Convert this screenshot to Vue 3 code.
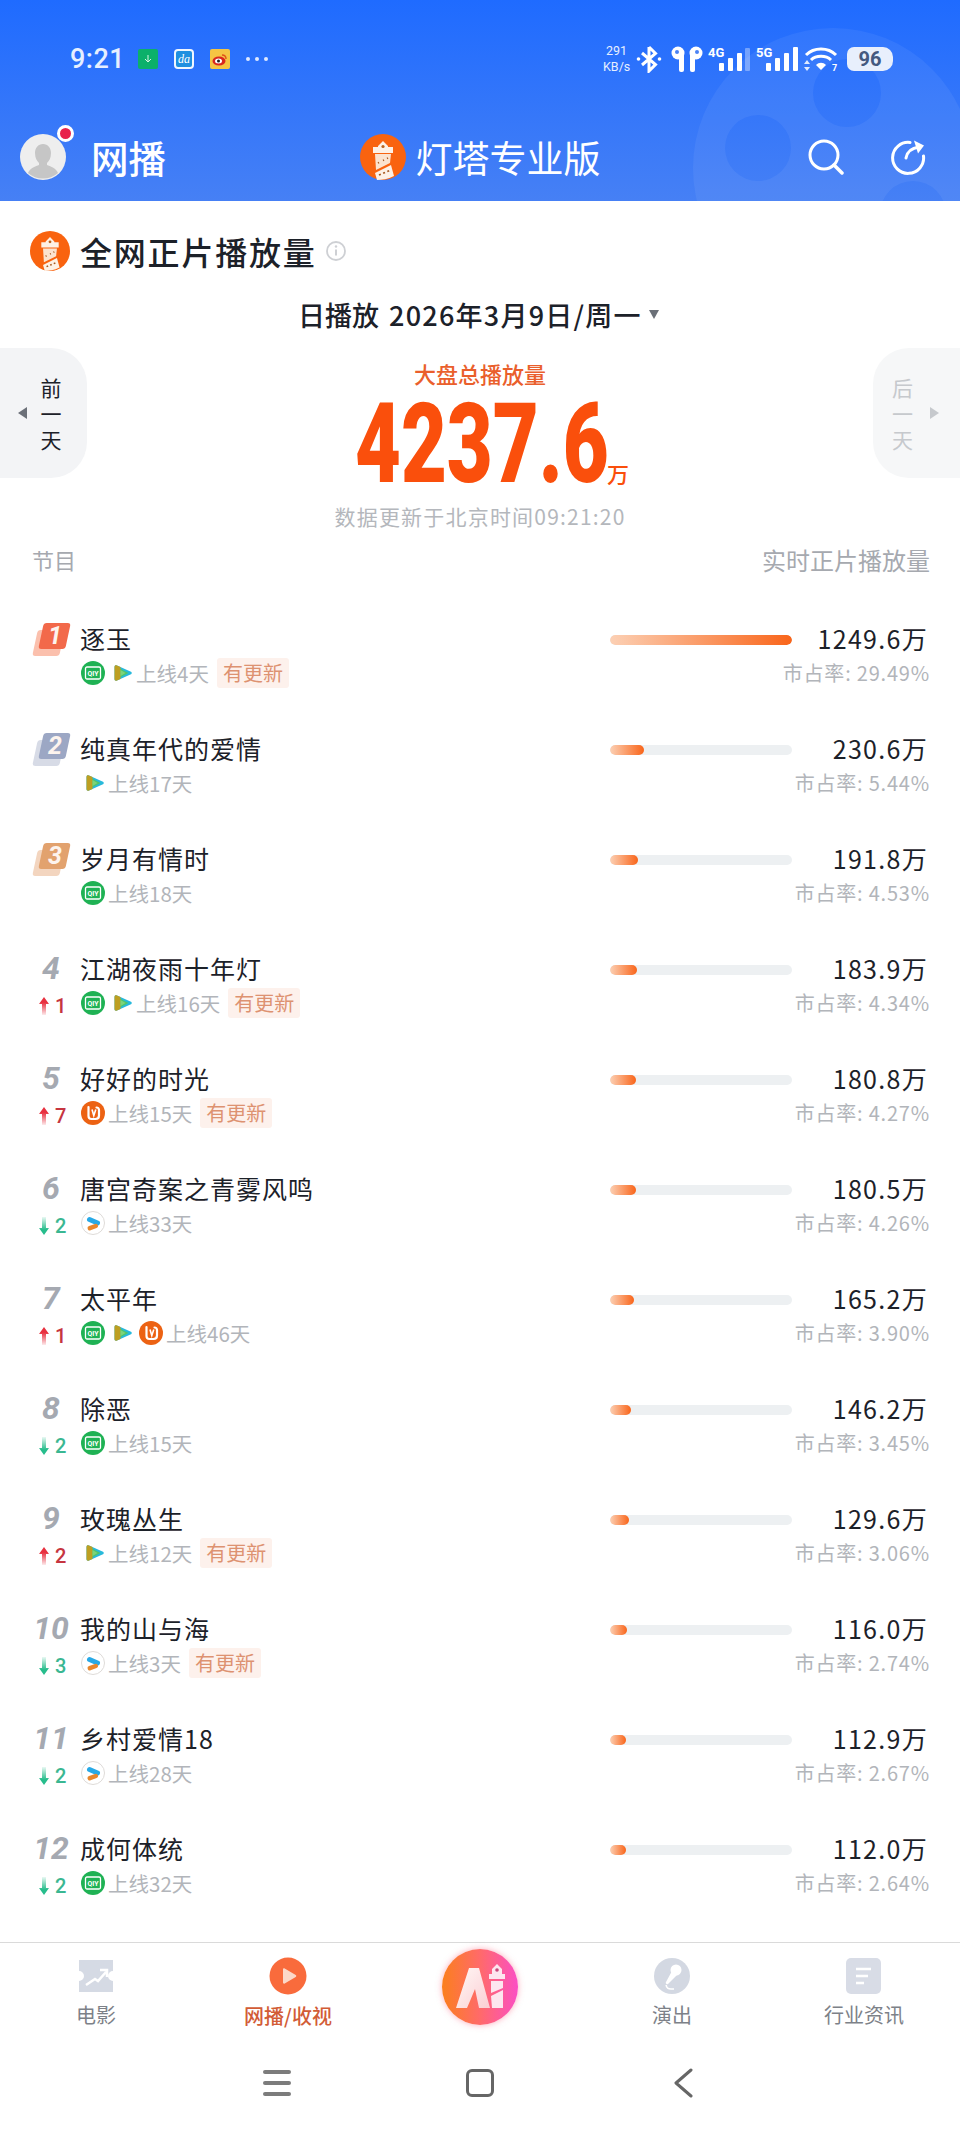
<template>
  <div class="page">
    <svg class="defs" aria-hidden="true">
      <defs>
        <symbol id="tower" viewBox="0 0 46 46">
          <circle cx="23" cy="23" r="23" fill="#f9630f" />
          <path d="M23 7l5 5v1h5v6H13v-6h5v-1z" fill="#fdf1e6" />
          <path d="M15 20h16l-1 9-14 7z" fill="#fbe3cf" />
          <path d="M15 39l16-8 3 11c-6 3-12 4-17 4z" fill="#fdf1e6" />
          <circle cx="23" cy="12.500" r="1.600" fill="#b9631f" />
          <path d="M18 29l1-.5M23 26.500l1-.5M27 24.500l1-.5M19 41l12-5" stroke="#a8591f" stroke-width="1.800" stroke-dasharray="2 2.500" />
        </symbol>
        <symbol id="iqiyi" viewBox="0 0 24 24">
          <circle cx="12" cy="12" r="12" fill="#1fb254" />
          <rect x="4.500" y="6" width="15" height="12" rx="1.500" fill="none" stroke="#fff" stroke-width="1.300" />
          <text x="12" y="15.200" text-anchor="middle" font-size="8" font-weight="700" fill="#fff" font-family="Roboto, sans-serif" textLength="11" lengthAdjust="spacingAndGlyphs">QIY</text>
        </symbol>
        <symbol id="tencent" viewBox="0 0 20 20">
          <path d="M4 2.500l14 6.300c1 .5 1 1.900 0 2.400L4 17.500c-1.500.6-2.500 0-2.500-1.500V4c0-1.500 1-2.100 2.500-1.500z" fill="#27b9dc" />
          <path d="M5 4.500L15.500 10 5 15.500z" fill="#4fc46c" />
          <path d="M1.500 4c0-1.500 1-2.100 2.500-1.500l3.500 1.600v11.800L4 17.500c-1.500.6-2.500 0-2.500-1.500z" fill="#bd9f22" />
          <path d="M7.500 7l5 3-5 3z" fill="#7cd37a" />
        </symbol>
        <symbol id="mango" viewBox="0 0 24 24">
          <circle cx="12" cy="12" r="12" fill="#ec6213" />
          <path d="M7.500 6v9c0 2 1 3 3 3h4c2.200 0 3.500-1.300 3.500-3.500V9c0-1.500-1-2.500-2.500-2.500" fill="none" stroke="#fff" stroke-width="2.200" stroke-linecap="round" />
          <path d="M11 8.500l1.800 6 2-6" fill="none" stroke="#fff" stroke-width="1.600" />
        </symbol>
        <symbol id="youku" viewBox="0 0 24 24">
          <circle cx="12" cy="12" r="11.500" fill="#fff" stroke="#dedbd8" />
          <path d="M8.500 8.500L16.500 12" fill="none" stroke="#27a9e6" stroke-width="5" stroke-linecap="round" />
          <path d="M8.800 17.200l6-2.200" fill="none" stroke="#e8872c" stroke-width="4.500" stroke-linecap="round" />
        </symbol>
        <linearGradient id="upFade" x1="0" y1="0" x2="0" y2="1">
          <stop offset="0.300" stop-color="#e8303f" />
          <stop offset="1" stop-color="#e8303f" stop-opacity="0.100" />
        </linearGradient>
        <linearGradient id="downFade" x1="0" y1="1" x2="0" y2="0">
          <stop offset="0.300" stop-color="#27bd8c" />
          <stop offset="1" stop-color="#27bd8c" stop-opacity="0.100" />
        </linearGradient>
      </defs>
    </svg>

    <header class="top">
      <svg class="reel" viewBox="0 0 300 201" aria-hidden="true">
        <path fill-rule="evenodd" fill="#fff" fill-opacity="0.06"
          d="M33 168a140 140 0 1 1 280 0a140 140 0 1 1-280 0zM153 93a34 34 0 1 0 68 0a34 34 0 1 0-68 0zM65 148a33 33 0 1 0 66 0a33 33 0 1 0-66 0zM220 214a33 33 0 1 0 66 0a33 33 0 1 0-66 0z" />
      </svg>
      <div class="status">
        <div class="status-left">
          <span class="time">9:21</span>
          <span class="note note-green">
            <svg width="10" height="10" viewBox="0 0 10 10"><path d="M5 1v7M2 5l3 3 3-3" fill="none" stroke="#d6f5e4" stroke-width="1" /></svg>
          </span>
          <span class="note note-blue">da</span>
          <span class="note note-yellow">
            <svg width="18" height="18" viewBox="0 0 18 18">
              <ellipse cx="8" cy="11" rx="6.500" ry="4.500" fill="#d9281e" />
              <ellipse cx="7.500" cy="11" rx="3.500" ry="2.500" fill="#fff" />
              <circle cx="7.500" cy="11" r="1.500" fill="#222" />
              <path d="M11 5c2 0 4 1 4 4" fill="none" stroke="#e0541b" stroke-width="1.500" />
            </svg>
          </span>
          <span class="more"><i></i><i></i><i></i></span>
        </div>
        <div class="status-right">
          <span class="speed">291<br />KB/s</span>
          <svg width="26" height="28" viewBox="0 0 26 28">
            <path d="M13 2v24l6.500-6.500L6 8M13 2l6.500 6.500L6 20" fill="none" stroke="#fff" stroke-width="3" />
            <circle cx="2.500" cy="14" r="1.800" fill="#fff" /><circle cx="23.500" cy="14" r="1.800" fill="#fff" />
          </svg>
          <svg class="s-pods" width="34" height="26" viewBox="0 0 34 26">
            <circle cx="8" cy="7" r="6.500" fill="#fff" /><rect x="9" y="7" width="5" height="19" rx="2" fill="#fff" />
            <circle cx="26" cy="7" r="6.500" fill="#fff" /><rect x="20" y="7" width="5" height="19" rx="2" fill="#fff" />
            <circle cx="7" cy="6" r="2" fill="#4a82f5" /><circle cx="27" cy="6" r="2" fill="#4a82f5" />
          </svg>
          <svg class="s-4g" width="42" height="26" viewBox="0 0 42 26">
            <text x="0" y="11" font-size="13" font-weight="700" fill="#fff" font-family="Roboto, sans-serif">4G</text>
            <rect x="11" y="17" width="5" height="8" rx="1" fill="#fff" />
            <rect x="20" y="12" width="5" height="13" rx="1" fill="#fff" />
            <rect x="29" y="7" width="5" height="18" rx="1" fill="#fff" />
            <rect x="37" y="2" width="5" height="23" rx="1" fill="#fff" fill-opacity="0.35" />
          </svg>
          <svg width="42" height="26" viewBox="0 0 42 26">
            <text x="0" y="11" font-size="13" font-weight="700" fill="#fff" font-family="Roboto, sans-serif">5G</text>
            <rect x="10" y="17" width="5" height="8" rx="1" fill="#fff" />
            <rect x="19" y="12" width="5" height="13" rx="1" fill="#fff" />
            <rect x="28" y="7" width="5" height="18" rx="1" fill="#fff" />
            <rect x="37" y="1" width="5" height="24" rx="1" fill="#fff" />
          </svg>
          <svg width="34" height="26" viewBox="0 0 34 26">
            <path d="M2 9c8-8 22-8 30 0M7 14c5-5 15-5 20 0" fill="none" stroke="#fff" stroke-width="3" />
            <path d="M12 19c3-3 7-3 10 0l-5 5z" fill="#fff" />
            <path d="M3 14l-3 4h6zM3 25l-3-4h6z" fill="#fff" fill-opacity="0.85" />
            <text x="28" y="25" font-size="9" font-weight="700" fill="#fff" font-family="Roboto, sans-serif">7</text>
          </svg>
          <span class="battery">96</span>
        </div>
      </div>

      <div class="nav">
        <div class="nav-left">
          <span class="avatar">
            <svg width="46" height="46" viewBox="0 0 46 46">
              <circle cx="23" cy="23" r="23" fill="#eeeeee" />
              <path d="M23 10c5 0 8 4 8 9s-2 8-4 10v2c3 1 9 3 11 8a23 23 0 0 1-30 0c2-5 8-7 11-8v-2c-2-2-4-5-4-10s3-9 8-9z" fill="#c6c6c6" />
            </svg>
            <i class="dot"></i>
          </span>
          <span class="channel">网播</span>
        </div>
        <div class="brand">
          <svg width="46" height="46"><use href="#tower" /></svg>
          <span>灯塔专业版</span>
        </div>
        <div class="nav-right">
          <svg width="36" height="36" viewBox="0 0 36 36">
            <circle cx="16" cy="16" r="14" fill="none" stroke="#fff" stroke-width="3" />
            <path d="M26 26l8 8" stroke="#fff" stroke-width="3.500" stroke-linecap="round" />
          </svg>
          <svg width="36" height="36" viewBox="0 0 36 36">
            <path d="M20 3.500A15.500 15.500 0 1 0 33.500 17" fill="none" stroke="#fff" stroke-width="3" stroke-linecap="round" />
            <path d="M16 19c1-6 6-10 13-11" fill="none" stroke="#fff" stroke-width="3" stroke-linecap="round" />
            <path d="M24 1.500l10 5-6 8" fill="#fff" />
          </svg>
        </div>
      </div>
    </header>

    <section class="heading">
      <svg width="40" height="40"><use href="#tower" /></svg>
      <h1>全网正片播放量</h1>
      <svg width="20" height="20" viewBox="0 0 20 20">
        <circle cx="10" cy="10" r="9" fill="none" stroke="#ced0d4" stroke-width="1.800" />
        <path d="M10 8.500v6" stroke="#ced0d4" stroke-width="2" />
        <circle cx="10" cy="5.500" r="1.200" fill="#ced0d4" />
      </svg>
    </section>

    <div class="date">
      <span>日播放</span>
      <span class="date-value">2026年3月9日/周一</span>
      <i class="caret"></i>
    </div>

    <section class="hero">
      <button class="day day-prev">
        <i class="tri tri-left"></i>
        <span>前</span><span>一</span><span>天</span>
      </button>
      <div class="total">
        <div class="total-label">大盘总播放量</div>
        <div class="total-value">
          <span class="total-num">4237.6</span>
          <span class="total-unit">万</span>
        </div>
        <div class="total-time">数据更新于北京时间09:21:20</div>
      </div>
      <button class="day day-next">
        <i class="tri tri-right"></i>
        <span>后</span><span>一</span><span>天</span>
      </button>
    </section>

    <div class="thead">
      <span>节目</span>
      <span class="thead-right">实时正片播放量</span>
    </div>

    <ul class="list">
      <li v-for="(row, i) in rows" :key="row.name" class="row">
        <div class="rank">
          <div v-if="i < 3" class="medal" :class="'medal-' + (i + 1)">
            <i class="medal-back"></i>
            <i class="medal-front"></i>
            <b>{{ i + 1 }}</b>
          </div>
          <template v-else>
            <div class="rank-num">{{ i + 1 }}</div>
            <div class="move" :class="row.move > 0 ? 'move-up' : 'move-down'">
              <svg width="10" height="18" viewBox="0 0 10 18">
                <path v-if="row.move > 0" d="M5 0l5 7H7v11H3V7H0z" fill="url(#upFade)" />
                <path v-else d="M5 18l5-7H7V0H3v11H0z" fill="url(#downFade)" />
              </svg>
              <span>{{ Math.abs(row.move) }}</span>
            </div>
          </template>
        </div>
        <div class="info">
          <div class="name">{{ row.name }}</div>
          <div class="meta">
            <template v-for="p in row.platforms" :key="p">
              <svg v-if="p === 'tencent'" class="logo-tx" width="20" height="20"><use href="#tencent" /></svg>
              <svg v-else width="24" height="24"><use :href="'#' + p" /></svg>
            </template>
            <span class="days">上线{{ row.days }}天</span>
            <span v-if="row.updated" class="tag">有更新</span>
          </div>
        </div>
        <div class="bar">
          <div class="bar-fill" :style="{ width: (row.share / 29.49) * 100 + '%' }"></div>
        </div>
        <div class="stat">
          <div class="stat-value">{{ row.value }}万</div>
          <div class="stat-share">市占率: {{ row.share.toFixed(2) }}%</div>
        </div>
      </li>
    </ul>

    <nav class="tabs">
      <div class="tab">
        <svg width="36" height="36" viewBox="0 0 36 36">
          <path d="M1 2h34v11a5 5 0 0 0 0 10v11H1V23a5 5 0 0 0 0-10z" fill="#d5dae4" />
          <path d="M8 27l9-6 3 2 8-9M22 12h7v7" fill="none" stroke="#fff" stroke-width="2.500" />
        </svg>
        <span>电影</span>
      </div>
      <div class="tab tab-active">
        <svg width="38" height="38" viewBox="0 0 38 38">
          <circle cx="19" cy="19" r="18.500" fill="#f96b3c" />
          <path d="M14 12.500c0-1 .8-1.500 1.700-1l11 6.500c.8.500.8 1.500 0 2l-11 6.500c-.9.500-1.700 0-1.700-1z" fill="#fcd8c8" />
        </svg>
        <span>网播/收视</span>
      </div>
      <div class="tab">
        <div class="ai">
          <svg width="76" height="76" viewBox="0 0 76 76">
            <defs>
              <linearGradient id="aiMark" x1="0" y1="0" x2="1" y2="1">
                <stop offset="0" stop-color="#fff" stop-opacity="0.95" />
                <stop offset="1" stop-color="#fbd3d8" stop-opacity="0.95" />
              </linearGradient>
            </defs>
            <path d="M14 59L27 19h10l11 40H37l-4-19-5 12-3 7z" fill="url(#aiMark)" />
            <path d="M55 15l5 5v5h3v5H47v-5h3v-5z" fill="#fde6ef" />
            <circle cx="55" cy="21" r="1.800" fill="#c8487c" />
            <path d="M49 32h12v7l-12 5z" fill="#fde6ef" />
            <path d="M49 47l12-6v18H50z" fill="#fde6ef" />
          </svg>
        </div>
      </div>
      <div class="tab">
        <svg width="36" height="36" viewBox="0 0 36 36">
          <circle cx="18" cy="18" r="18" fill="#d3d8e2" />
          <circle cx="22" cy="12" r="5.500" fill="#fff" />
          <path d="M18 13l5 4-9 9c-1 1-3-1-2-2z" fill="#fff" />
          <path d="M12 27c1 4 3 4 5 4h3" fill="none" stroke="#fff" stroke-width="1.500" />
        </svg>
        <span>演出</span>
      </div>
      <div class="tab">
        <svg width="36" height="36" viewBox="0 0 36 36">
          <rect width="35" height="36" rx="5" fill="#d8dce6" />
          <path d="M10 11h15M10 18h12M10 25h8" stroke="#fff" stroke-width="2.500" />
        </svg>
        <span>行业资讯</span>
      </div>
    </nav>

    <div class="sysbar">
      <div class="sys"><i class="burger"></i></div>
      <div class="sys"><i class="square"></i></div>
      <div class="sys">
        <svg width="20" height="30" viewBox="0 0 20 30"><path d="M18 2L3 15l15 13" fill="none" stroke="#666" stroke-width="3" stroke-linecap="round" stroke-linejoin="round" /></svg>
      </div>
    </div>
  </div>
</template>

<script setup>
const rows = [
  { name: "逐玉", value: "1249.6", share: 29.49, days: 4, updated: true, platforms: ["iqiyi", "tencent"] },
  { name: "纯真年代的爱情", value: "230.6", share: 5.44, days: 17, platforms: ["tencent"] },
  { name: "岁月有情时", value: "191.8", share: 4.53, days: 18, platforms: ["iqiyi"] },
  { name: "江湖夜雨十年灯", value: "183.9", share: 4.34, days: 16, updated: true, move: 1, platforms: ["iqiyi", "tencent"] },
  { name: "好好的时光", value: "180.8", share: 4.27, days: 15, updated: true, move: 7, platforms: ["mango"] },
  { name: "唐宫奇案之青雾风鸣", value: "180.5", share: 4.26, days: 33, move: -2, platforms: ["youku"] },
  { name: "太平年", value: "165.2", share: 3.9, days: 46, move: 1, platforms: ["iqiyi", "tencent", "mango"] },
  { name: "除恶", value: "146.2", share: 3.45, days: 15, move: -2, platforms: ["iqiyi"] },
  { name: "玫瑰丛生", value: "129.6", share: 3.06, days: 12, updated: true, move: 2, platforms: ["tencent"] },
  { name: "我的山与海", value: "116.0", share: 2.74, days: 3, updated: true, move: -3, platforms: ["youku"] },
  { name: "乡村爱情18", value: "112.9", share: 2.67, days: 28, move: -2, platforms: ["youku"] },
  { name: "成何体统", value: "112.0", share: 2.64, days: 32, move: -2, platforms: ["iqiyi"] },
];
</script>

<style>
body {
  background: #fff;
}
</style>

<style scoped>
.page {
  width: 960px;
  height: 2133px;
  overflow: hidden;
  background: #fff;
  color: #1c2129;
  font-family: "Noto Sans CJK SC", sans-serif;
}

.defs {
  position: absolute;
  width: 0;
  height: 0;
}

.top {
  position: relative;
  height: 201px;
  padding-top: 40px;
  box-sizing: border-box;
  overflow: hidden;
  background: linear-gradient(180deg, #1f6bff 0%, #4680f5 100%);
  color: #fff;
}

.reel {
  position: absolute;
  left: 660px;
  top: 0;
  width: 300px;
  height: 201px;
}

.status {
  position: relative;
  height: 38px;
  display: flex;
  justify-content: space-between;
  align-items: center;
  padding: 0 67px 0 70px;
}

.status-left {
  display: flex;
  align-items: center;
  gap: 16px;
}

.time {
  width: 52px;
  font-family: Roboto, sans-serif;
  font-size: 27px;
  font-weight: 500;
  letter-spacing: 0.500px;
  color: #e6efff;
  white-space: nowrap;
}

.note {
  width: 20px;
  height: 20px;
  display: flex;
  align-items: center;
  justify-content: center;
  border-radius: 2px;
}

.note-green {
  background: #0bb06a;
}

.note-blue {
  background: #1f8fe0;
  border: 2px solid #f0f6ff;
  box-sizing: border-box;
  border-radius: 4px;
  font-family: "Liberation Serif", serif;
  font-style: italic;
  font-size: 12px;
  color: #fff;
}

.note-yellow {
  background: #f5c443;
}

.more {
  display: flex;
  gap: 5px;
}

.more i {
  width: 4px;
  height: 4px;
  border-radius: 50%;
  background: #dfe9ff;
}

.status-right {
  display: flex;
  align-items: center;
  gap: 6px;
}

.speed {
  width: 27px;
  font-family: Roboto, sans-serif;
  font-size: 12.500px;
  line-height: 16px;
  text-align: center;
  color: #e6efff;
  white-space: nowrap;
}

.s-pods {
  margin-left: 2px;
}

.s-4g {
  margin-left: -2px;
}

.battery {
  width: 46px;
  height: 24px;
  margin-left: 3px;
  border-radius: 7px 10px 10px 7px;
  background: #e8effc;
  color: #44597f;
  font-family: Roboto, sans-serif;
  font-size: 20px;
  font-weight: 700;
  line-height: 24px;
  text-align: center;
}

.nav {
  position: relative;
  height: 46px;
  margin-top: 56px;
  padding: 0 20px;
  display: grid;
  grid-template-columns: 1fr auto 1fr;
  align-items: center;
}

.nav-left {
  display: flex;
  align-items: center;
  gap: 25px;
}

.avatar {
  position: relative;
  width: 46px;
  height: 46px;
}

.dot {
  position: absolute;
  left: 37px;
  top: -9px;
  width: 11px;
  height: 11px;
  border: 3px solid #fff;
  border-radius: 50%;
  background: #e8224c;
}

.channel {
  font-size: 37.500px;
  font-weight: 500;
  line-height: 46px;
}

.brand {
  display: flex;
  align-items: center;
  gap: 10px;
  font-size: 37px;
  line-height: 46px;
}

.nav-right {
  display: flex;
  justify-content: flex-end;
  gap: 46px;
  padding-right: 14px;
}

.heading {
  height: 40px;
  margin-top: 30px;
  padding-left: 30px;
  display: flex;
  align-items: center;
}

.heading h1 {
  margin: 0 9px 0 10px;
  font-size: 32px;
  font-weight: 500;
  letter-spacing: 1.800px;
  line-height: 40px;
}

.date {
  height: 40px;
  margin-top: 24px;
  padding-left: 298px;
  display: flex;
  align-items: center;
  font-size: 27px;
  font-weight: 500;
  line-height: 40px;
}

.date-value {
  margin-left: 10px;
  letter-spacing: 1.250px;
}

.caret {
  width: 0;
  height: 0;
  margin: -2px 0 0 7px;
  border: 5px solid transparent;
  border-top: 9px solid #6b7078;
  border-bottom: 0;
}

.hero {
  height: 184px;
  margin-top: 13px;
  display: flex;
  justify-content: space-between;
  align-items: flex-start;
}

.day {
  position: relative;
  width: 87px;
  height: 130px;
  padding: 0;
  border: 0;
  display: flex;
  flex-direction: column;
  align-items: center;
  justify-content: center;
  background: #f3f4f6;
  font-family: inherit;
  font-size: 21px;
  line-height: 26px;
  color: #1c2129;
}

.day-prev {
  border-radius: 0 36px 36px 0;
  padding-left: 15px;
}

.day-next {
  border-radius: 36px 0 0 36px;
  padding-right: 28px;
  background: #f6f7f8;
  color: #c6c9cd;
}

.tri {
  position: absolute;
  top: 59px;
  width: 0;
  height: 0;
  border: 6px solid transparent;
  border-left-width: 0;
  border-right: 9px solid #6b7078;
}

.tri-left {
  left: 18px;
}

.tri-right {
  right: 21px;
  border-width: 6px 0 6px 9px;
  border-color: transparent transparent transparent #c6c9cd;
}

.total {
  flex: 1;
  display: flex;
  flex-direction: column;
  align-items: center;
}

.total-label {
  height: 28px;
  margin-top: 11px;
  font-size: 22px;
  font-weight: 500;
  line-height: 28px;
  color: #ea5f2c;
}

.total-value {
  height: 92px;
  margin: 11px 0 0 24px;
  display: flex;
  align-items: flex-end;
}

.total-num {
  width: 250px;
  font-family: Roboto, sans-serif;
  font-size: 111px;
  font-weight: 900;
  line-height: 92px;
  color: #fa4f0c;
  display: block;
  white-space: nowrap;
  transform: scaleX(0.714);
  transform-origin: left center;
}

.total-unit {
  margin: 0 0 4px 2px;
  font-size: 22px;
  font-weight: 500;
  line-height: 26px;
  color: #fa4f0c;
}

.total-time {
  margin-top: 11px;
  font-size: 21px;
  letter-spacing: 1.200px;
  line-height: 30px;
  color: #b4b7bc;
}

.thead {
  height: 40px;
  margin-top: 7px;
  padding: 0 30px 0 32px;
  display: flex;
  justify-content: space-between;
  align-items: center;
  font-size: 22px;
  color: #a6a9af;
}

.thead-right {
  font-size: 24px;
}

.list {
  margin: 21px 0 0;
  padding: 0;
  list-style: none;
}

.row {
  height: 110px;
  padding: 20px 30px;
  box-sizing: border-box;
  display: flex;
}

.rank {
  width: 51px;
  flex: none;
}

.medal {
  position: relative;
  width: 40px;
  height: 36px;
  margin: 3px 0 0 2px;
}

.medal-back,
.medal-front {
  position: absolute;
  width: 27px;
  height: 26px;
  border-radius: 3px;
  transform: skewX(-12deg);
}

.medal-back {
  left: 3px;
  top: 7px;
}

.medal-front {
  left: 9px;
  top: 0;
}

.medal-1 .medal-back {
  background: #fbc0ad;
}

.medal-1 .medal-front {
  background: #f2694a;
}

.medal-2 .medal-back {
  background: #d7dbe6;
}

.medal-2 .medal-front {
  background: #9ca7c4;
}

.medal-3 .medal-back {
  background: #f3d5bf;
}

.medal-3 .medal-front {
  background: #e2a26e;
}

.medal b {
  position: absolute;
  left: 12px;
  top: -2px;
  width: 22px;
  font-family: Roboto, sans-serif;
  font-size: 25px;
  font-style: italic;
  font-weight: 700;
  line-height: 30px;
  text-align: center;
  color: #fdf4ee;
}

.rank-num {
  width: 38px;
  margin-left: 2px;
  height: 36px;
  font-family: Roboto, sans-serif;
  font-size: 32px;
  font-style: italic;
  font-weight: 700;
  line-height: 36px;
  text-align: center;
  color: #a5a9b1;
}

.move {
  height: 34px;
  margin: 3px 0 0 9px;
  display: flex;
  align-items: center;
  gap: 6px;
  font-family: Roboto, sans-serif;
  font-size: 20px;
  font-weight: 500;
}

.move-up {
  color: #c63540;
}

.move-down {
  color: #3ab792;
}

.info {
  flex: 1;
  min-width: 0;
}

.name {
  height: 36px;
  margin-left: -1px;
  font-size: 25px;
  letter-spacing: 1px;
  line-height: 36px;
}

.meta {
  height: 34px;
  display: flex;
  align-items: center;
  gap: 6px;
}

.logo-tx {
  margin-left: 2px;
}

.logo-tx:first-child {
  margin-left: 4px;
}

.days {
  margin-left: -3px;
  font-size: 20.500px;
  color: #b2b5ba;
}

.tag {
  height: 30px;
  margin-left: 2px;
  padding: 0 6px;
  border-radius: 3px;
  background: #fdf1ec;
  font-size: 20px;
  line-height: 30px;
  color: #dd9271;
}

.bar {
  width: 182px;
  height: 10px;
  margin-top: 15px;
  flex: none;
  border-radius: 5px;
  background: #edf0f2;
  overflow: hidden;
}

.bar-fill {
  height: 100%;
  border-radius: 5px;
  background: linear-gradient(90deg, #fcd0b4 0%, #f9651a 100%);
}

.stat {
  width: 138px;
  flex: none;
  text-align: right;
}

.stat-value {
  height: 36px;
  padding-right: 2px;
  font-size: 25px;
  letter-spacing: 1.300px;
  line-height: 36px;
}

.stat-share {
  height: 34px;
  display: flex;
  justify-content: flex-end;
  font-size: 20px;
  line-height: 34px;
  letter-spacing: 0.800px;
  color: #b2b5ba;
  white-space: nowrap;
}

.tabs {
  margin-top: 22px;
  height: 98px;
  box-sizing: border-box;
  border-top: 1px solid #dadada;
  display: flex;
}

.tab {
  width: 192px;
  padding-top: 15px;
  box-sizing: border-box;
  display: flex;
  flex-direction: column;
  align-items: center;
  font-size: 20px;
  color: #7d8188;
}

.tab span {
  margin-top: 7px;
  line-height: 28px;
}

.tab-active {
  color: #d25c36;
  padding-top: 14px;
  font-weight: 500;
}

.ai {
  width: 76px;
  height: 76px;
  margin-top: -9px;
  border-radius: 50%;
  background: linear-gradient(90deg, #fb7f1d 0%, #ff6a6a 50%, #fb4fc4 100%);
  box-shadow: 0 0 6px rgba(251, 90, 120, 0.5);
}

.ai svg {
  display: block;
}

.sysbar {
  height: 93px;
  padding-bottom: 7px;
  box-sizing: border-box;
  display: flex;
  justify-content: center;
  align-items: center;
}

.sys {
  width: 203px;
  display: flex;
  justify-content: center;
}

.burger {
  width: 28px;
  height: 4px;
  margin: 11px 0;
  background: #7c7c7c;
  box-shadow: 0 -11px 0 #7c7c7c, 0 11px 0 #7c7c7c;
  border-radius: 2px;
}

.square {
  width: 22px;
  height: 22px;
  border: 3px solid #666;
  border-radius: 6px;
}
</style>
